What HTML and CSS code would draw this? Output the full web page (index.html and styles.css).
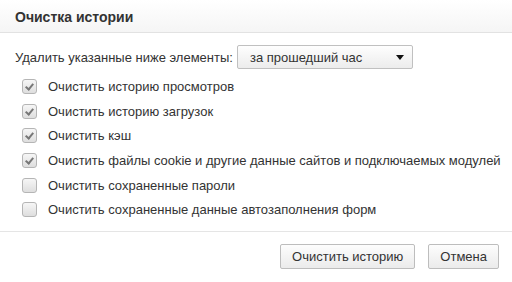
FILE: index.html
```html
<!DOCTYPE html>
<html lang="ru">
<head>
    <meta charset="UTF-8">
    <title>Очистка истории</title>
    <link rel="stylesheet" href="styles.css">
</head>
<body>

<div class="dialog">
    <div class="dialog-header">
        <h1 class="dialog-title">Очистка истории</h1>
    </div>

    <div class="dialog-body">
        <div class="period-row">
            <span>Удалить указанные ниже элементы:</span>
            <div class="select">
                <span>за прошедший час</span>
                <span class="select-arrow"></span>
            </div>
        </div>

        <label class="check-row"><span class="checkbox checked"></span>Очистить историю просмотров</label>
        <label class="check-row"><span class="checkbox checked"></span>Очистить историю загрузок</label>
        <label class="check-row"><span class="checkbox checked"></span>Очистить кэш</label>
        <label class="check-row"><span class="checkbox checked"></span>Очистить файлы cookie и другие данные сайтов и подключаемых модулей</label>
        <label class="check-row"><span class="checkbox"></span>Очистить сохраненные пароли</label>
        <label class="check-row"><span class="checkbox"></span>Очистить сохраненные данные автозаполнения форм</label>
    </div>

    <div class="dialog-footer">
        <button class="btn">Очистить историю</button>
        <button class="btn">Отмена</button>
    </div>
</div>

</body>
</html>
```

FILE: styles.css
```css
body {
    margin: 0;
    font-family: "Liberation Sans", Arial, sans-serif;
    font-size: 13px;
    color: #333;
    background: #fff;
}

.dialog {
    width: 512px;
    height: 282px;
    display: flex;
    flex-direction: column;
}

.dialog-header {
    height: 32px;
    background: linear-gradient(#ffffff, #f5f5f5);
    border-bottom: 1px solid #e2e2e2;
    display: flex;
    align-items: center;
    padding-left: 15px;
}

.dialog-title {
    margin: 2px 0 0 0;
    font-size: 14px;
    font-weight: bold;
    color: #333;
}

.dialog-body {
    padding: 12px 15px 0 15px;
    height: 186px;
    border-bottom: 1px solid #e5e5e5;
}

.period-row {
    display: flex;
    align-items: center;
    gap: 4px;
    margin-bottom: 5px;
}

.select {
    width: 176px;
    height: 24px;
    box-sizing: border-box;
    border: 1px solid #c0c0c0;
    border-radius: 2px;
    background: linear-gradient(#fefefe, #ececec);
    display: flex;
    align-items: center;
    justify-content: space-between;
    padding: 0 8px 0 12px;
    color: #333;
}

.select-arrow {
    width: 0;
    height: 0;
    border-left: 4px solid transparent;
    border-right: 4px solid transparent;
    border-top: 5px solid #111;
}

.check-row {
    display: flex;
    align-items: center;
    height: 24.7px;
    padding-left: 7px;
    white-space: nowrap;
}

.checkbox {
    width: 13px;
    height: 13px;
    border: 1px solid #b5b5b5;
    border-radius: 3px;
    background: linear-gradient(#f6f6f6, #dedede);
    margin-right: 11px;
    position: relative;
    flex-shrink: 0;
}

.checkbox.checked::after {
    content: "";
    position: absolute;
    left: 4px;
    top: 2px;
    width: 3px;
    height: 6px;
    border-right: 2px solid #777;
    border-bottom: 2px solid #777;
    transform: rotate(40deg);
}

.dialog-footer {
    flex: 1;
    display: flex;
    justify-content: flex-end;
    align-items: center;
    gap: 13px;
    padding-right: 13px;
    padding-bottom: 2px;
}

.btn {
    font-family: inherit;
    font-size: 13px;
    color: #333;
    height: 25px;
    padding: 0 11px;
    min-width: 70px;
    border: 1px solid #bdbdbd;
    border-radius: 2px;
    background: linear-gradient(#fdfdfd, #ebebeb);
}
```
